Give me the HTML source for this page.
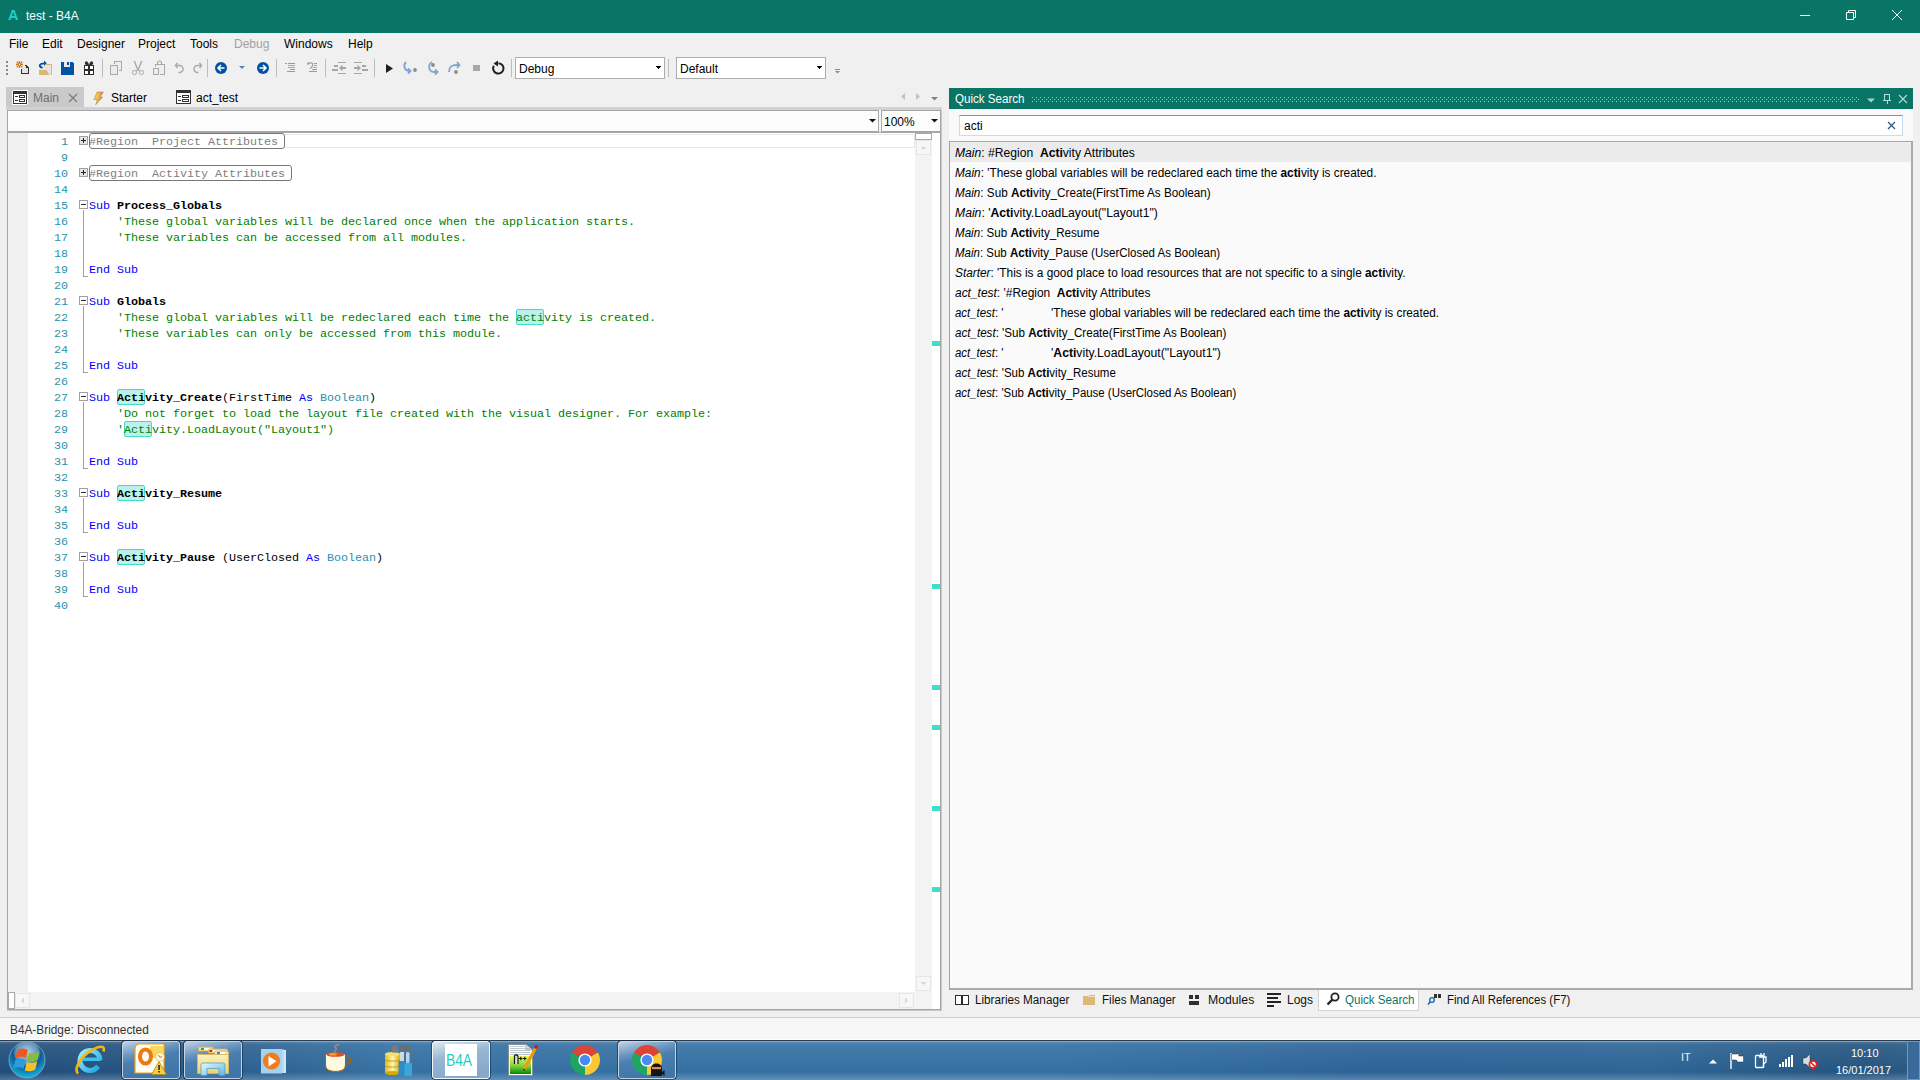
<!DOCTYPE html>
<html><head><meta charset="utf-8">
<style>
*{margin:0;padding:0;box-sizing:border-box}
html,body{width:1920px;height:1080px;overflow:hidden;background:#f0f0f0;font-family:"Liberation Sans",sans-serif;font-size:12px;color:#000}
div,span,svg{position:absolute}
span.i{position:static}
.t{white-space:pre;line-height:1}
.mono{font-family:"Liberation Mono",monospace;font-size:11.75px;letter-spacing:-0.05px;line-height:16px;white-space:pre}
.ln{left:8px;width:60px;text-align:right;color:#2b91af}
.cl{left:89px}
.kw{color:#0000ff;position:static}
.nm{font-weight:bold;position:static}
.cm{color:#008000;position:static}
.ty{color:#2b91af;position:static}
.rg{color:#808080;position:static}
.bk{color:#000;position:static}
.hl{height:16px;width:28px;background:#b9f2ec;border:1px solid #44d9c8;border-radius:2px}
.fb{width:9px;height:9px;border:1px solid #a0a0a0;background:#fff;left:79px}
.fv{left:83px;width:1px;background:#a0a0a0}
.fh{left:83px;height:1px;width:5px;background:#a0a0a0}
.mk{left:932px;width:8px;height:5px;background:#3ddfcb}
.qs{left:955px;font-size:12px;white-space:pre;line-height:20px;height:20px;transform-origin:0 0;padding-top:1px}
.qs i{font-style:italic}
.qs b{font-weight:bold}
.menu{top:38px;font-size:12px;white-space:pre}
.sep{width:1px;background:#c4c4c4}
</style></head><body>
<div style="left:0;top:0;width:1920px;height:33px;background:#087567"></div>
<div class="t" style="left:8px;top:8px;font-size:14.5px;font-weight:bold;color:#1fd0c6">A</div>
<div class="t" style="left:26px;top:10px;font-size:12px;color:#fff">test - B4A</div>
<div style="left:1800px;top:15px;width:10px;height:1px;background:#fff"></div>
<svg style="left:1845px;top:9px" width="12" height="12" viewBox="0 0 12 12"><path d="M1.5 3.5h7v7h-7z M3.5 3.5v-2h7v7h-2" fill="none" stroke="#fff" stroke-width="1"/></svg>
<svg style="left:1891px;top:9px" width="12" height="12" viewBox="0 0 12 12"><path d="M1 1L11 11M11 1L1 11" stroke="#fff" stroke-width="1"/></svg>
<!-- menu -->
<div class="menu t" style="left:9px">File</div>
<div class="menu t" style="left:42px">Edit</div>
<div class="menu t" style="left:77px">Designer</div>
<div class="menu t" style="left:138px">Project</div>
<div class="menu t" style="left:190px">Tools</div>
<div class="menu t" style="left:234px;color:#a2a2a2">Debug</div>
<div class="menu t" style="left:284px">Windows</div>
<div class="menu t" style="left:348px">Help</div>
<svg style="left:0;top:0" width="860" height="84" viewBox="0 0 860 84" shape-rendering="crispEdges">
<!-- grip -->
<g fill="#8a8a8a"><rect x="6" y="61" width="2" height="2"/><rect x="6" y="65" width="2" height="2"/><rect x="6" y="69" width="2" height="2"/><rect x="6" y="73" width="2" height="2"/></g>
<!-- new -->
<path d="M24.5 65.5h1.5l2.5 2.5v5.5h-7v-5" fill="#e3e3e3" stroke="#333" stroke-width="1.2"/>
<rect x="22" y="67" width="3" height="6" fill="#e3e3e3"/><path d="M26 65.5l2.5 2.5h-2.5z" fill="#333"/>
<g shape-rendering="auto"><path d="M16 64.5h7M19.5 61v7" stroke="#cc7a14" stroke-width="1.3"/>
<g fill="#cc7a14"><circle cx="17.4" cy="62.4" r="0.9"/><circle cx="21.6" cy="62.4" r="0.9"/><circle cx="17.4" cy="66.6" r="0.9"/><circle cx="21.6" cy="66.6" r="0.9"/><circle cx="19.5" cy="64.5" r="1.7"/></g>
<circle cx="19.5" cy="64.5" r="0.7" fill="#fff"/></g>
<!-- open -->
<rect x="39" y="65" width="12" height="10" fill="#e6e6e6"/>
<path d="M46 64.5h5.5v10.5" fill="none" stroke="#dcb478" stroke-width="1"/>
<path d="M39 70h7.5l3 5h-10.5z" fill="#ddb678" shape-rendering="auto"/>
<g shape-rendering="auto"><path d="M42.5 67.6c-3 0-3.6-2.6-1.6-3.6c1.4-0.7 3.2-0.6 4.6-0.6" fill="none" stroke="#0052a2" stroke-width="1.9"/><path d="M44 60.6l2.8 2.6-2.8 2.6z" fill="#0052a2"/></g>
<!-- save -->
<path d="M61 62h11l2 2v11h-13z" fill="#0052a4"/><rect x="64" y="62" width="6" height="5" fill="#e8e8e8"/><rect x="67" y="62" width="2" height="3" fill="#0052a4"/>
<!-- save all -->
<rect x="84" y="65" width="10" height="10" fill="#2d2d2d"/>
<g shape-rendering="auto" fill="#2d2d2d"><path d="M85 62.5c1-2 3-1.5 4 2.5h-2.5c-1 0-2-1-1.5-2.5z"/><path d="M93 62.5c-1-2-3-1.5-4 2.5h2.5c1 0 2-1 1.5-2.5z"/></g>
<g fill="#fff"><rect x="85" y="66" width="3" height="3"/><rect x="90" y="66" width="3" height="3"/><rect x="85" y="71" width="3" height="3"/><rect x="90" y="71" width="3" height="3"/></g>
<!-- seps -->
<g fill="#bdbdbd"><rect x="102" y="59" width="1" height="18"/><rect x="207" y="59" width="1" height="18"/><rect x="276" y="59" width="1" height="18"/><rect x="325" y="59" width="1" height="18"/><rect x="374" y="59" width="1" height="18"/><rect x="511" y="59" width="1" height="18"/><rect x="668" y="59" width="1" height="18"/></g>
<!-- copy -->
<g fill="#ebebeb" stroke="#a9a9a9" stroke-width="1"><path d="M114.5 64v-2.5h7v9h-2.5" fill="#eeeeee"/><rect x="110.5" y="65.5" width="7" height="9"/></g>
<!-- cut -->
<g fill="none" stroke="#a9a9a9" shape-rendering="auto"><path d="M134.3 61l3.7 9.3M141.7 61l-3.7 9.3" stroke-width="1.4"/><circle cx="134.5" cy="72.5" r="2.1" stroke-width="1"/><circle cx="141.5" cy="72.5" r="2.1" stroke-width="1"/><path d="M136 71l2-1 2 1" stroke-width="1"/></g>
<!-- paste -->
<g fill="none" stroke="#a9a9a9" stroke-width="1"><path d="M155.5 67v-2.5h9v10h-4.5" fill="#eeeeee"/><rect x="153.5" y="68.5" width="5" height="6" fill="#eeeeee"/></g>
<path d="M157.5 64.5v-1.5a2 2 0 0 1 4 0v1.5" fill="none" stroke="#a9a9a9" stroke-width="1.2" shape-rendering="auto"/>
<!-- undo redo -->
<g fill="none" stroke="#a9a9a9" stroke-width="1.5" shape-rendering="auto"><path d="M176 65.5h3.5a3.5 3.5 0 0 1 0 7h-1"/><path d="M177.5 63l-2 2.5 2 2.5"/><path d="M201 65.5h-3.5a3.5 3.5 0 0 0 0 7h1"/><path d="M199.5 63l2 2.5-2 2.5"/></g>
<!-- back fwd -->
<g shape-rendering="auto"><circle cx="221" cy="68" r="6" fill="#0051a2"/><path d="M224.5 68h-6M221 65l-3 3 3 3" fill="none" stroke="#fff" stroke-width="1.6"/>
<path d="M239 66h6l-3 3z" fill="#5a7ec2"/>
<circle cx="263" cy="68" r="6" fill="#0051a2"/><path d="M259.5 68h6M263 65l3 3-3 3" fill="none" stroke="#fff" stroke-width="1.6"/></g>
<!-- comment -->
<g fill="#9a9a9a"><rect x="285" y="63" width="2" height="1"/><rect x="288" y="63" width="7" height="1"/><rect x="290" y="69" width="5" height="1"/><rect x="287" y="71" width="8" height="1"/></g>
<g fill="#86bf86"><rect x="288" y="65" width="7" height="1"/><rect x="288" y="67" width="7" height="1"/></g>
<g fill="#9a9a9a"><rect x="314" y="63" width="3" height="1"/><rect x="312" y="69" width="5" height="1"/><rect x="309" y="71" width="8" height="1"/></g>
<g fill="#86bf86"><rect x="314" y="65" width="3" height="1"/><rect x="313" y="67" width="4" height="1"/></g>
<g shape-rendering="auto"><path d="M308.5 63.5c2-1.2 4.3-0.8 4.3 1.2c0 1.5-1.3 2.5-2.8 4" fill="none" stroke="#9a9a9a" stroke-width="1.1"/><path d="M307 62.5l3 0.6-2.2 2.4z" fill="#9a9a9a"/></g>
<!-- outdent indent -->
<g fill="#a6a6a6"><rect x="338" y="62" width="8" height="1"/><rect x="338" y="73" width="8" height="1"/><rect x="334" y="65" width="4" height="2"/><rect x="332" y="69" width="6" height="2"/><rect x="341" y="67" width="5" height="2"/>
<path d="M339 68l3.5-3.2v6.4z" shape-rendering="auto"/>
<rect x="354" y="62" width="8" height="1"/><rect x="354" y="73" width="8" height="1"/><rect x="362" y="65" width="4" height="2"/><rect x="362" y="69" width="6" height="2"/><rect x="354" y="67" width="4.5" height="2"/>
<path d="M361 68l-3.5-3.2v6.4z" shape-rendering="auto"/></g>
<!-- run -->
<path d="M386 64l7 4.5-7 4.5z" fill="#1e1e1e" shape-rendering="auto"/>
<!-- step -->
<g fill="none" stroke="#7ea8d2" stroke-width="1.9" shape-rendering="auto"><path d="M406 62c-3 3-2 9 4 9"/><path d="M408 68.5l2.5 2.5-2.5 2.5"/><path d="M432 62c-4 2-4 10 2 10h3"/><path d="M435 69.5l2.5 2.5-2.5 2.5"/><path d="M449 72c0-5 2-7 8-7h3"/><path d="M457 62l2.5 3-2.5 3"/></g>
<g fill="#8c8c8c" shape-rendering="auto"><circle cx="415" cy="70" r="1.9"/><circle cx="433" cy="65" r="1.9"/><circle cx="456" cy="72" r="1.9"/></g>
<rect x="473" y="65" width="7" height="6" fill="#a8a8a8"/>
<!-- restart -->
<g shape-rendering="auto"><path d="M498.5 63.2A5.2 5.2 0 1 1 493.8 65.8" fill="none" stroke="#1e1e1e" stroke-width="2"/><path d="M493.5 63.5l4.5-3v6z" fill="#1e1e1e"/></g>
<!-- combos -->
<rect x="515.5" y="57.5" width="149" height="21" fill="#fff" stroke="#adadad"/>
<path d="M655 66h6l-3 3z" fill="#000"/>
<rect x="676.5" y="57.5" width="149" height="21" fill="#fff" stroke="#adadad"/>
<path d="M816 66h6l-3 3z" fill="#000"/>
<g fill="#8a8a8a"><rect x="835" y="69" width="5" height="1"/><path d="M835 71h5l-2.5 2.5z" shape-rendering="auto"/></g>
</svg>
<div class="t" style="left:519px;top:63px;font-size:12px">Debug</div>
<div class="t" style="left:680px;top:63px;font-size:12px">Default</div>
<!-- doc tabs -->
<div style="left:6px;top:87px;width:78px;height:20px;background:#cacaca"></div>
<svg style="left:0;top:84px" width="260" height="24" viewBox="0 84 260 24" shape-rendering="crispEdges">
<rect x="12" y="90" width="16" height="15" rx="2" fill="#fff"/>
<rect x="13.5" y="91.5" width="13" height="12" fill="#fff" stroke="#333"/><rect x="13" y="91" width="14" height="3" fill="#333"/>
<rect x="15" y="96" width="3" height="1" fill="#333"/><rect x="15" y="100" width="3" height="1" fill="#333"/>
<rect x="19.5" y="95.5" width="5" height="2" fill="#fff" stroke="#333"/><rect x="19.5" y="99.5" width="5" height="2" fill="#fff" stroke="#333"/>
<path d="M69 94l8 8M77 94l-8 8" stroke="#787878" stroke-width="1.1" shape-rendering="auto"/>
<linearGradient id="bolt" x1="0" y1="0" x2="1" y2="0.3"><stop offset="0" stop-color="#d8e070"/><stop offset="0.45" stop-color="#ffc040"/><stop offset="1" stop-color="#f05870"/></linearGradient><path d="M97 92h6.3l-3.3 5h2.5l-6.8 7.8 1.8-5.3h-3.5z" fill="url(#bolt)" stroke="#8a8030" stroke-width="0.5" shape-rendering="auto"/>
<rect x="176" y="90" width="15" height="14" rx="1" fill="#fff"/>
<rect x="176.5" y="90.5" width="14" height="13" fill="#fff" stroke="#333"/><rect x="176" y="90" width="15" height="3" fill="#333"/>
<rect x="178" y="96" width="3" height="1" fill="#333"/><rect x="178" y="100" width="3" height="1" fill="#333"/>
<rect x="182.5" y="95.5" width="6" height="2" fill="#fff" stroke="#333"/><rect x="182.5" y="99.5" width="6" height="2" fill="#fff" stroke="#333"/>
</svg>
<div class="t" style="left:33px;top:92px;font-size:12px;color:#6e6e6e">Main</div>
<div class="t" style="left:111px;top:92px;font-size:12px">Starter</div>
<div class="t" style="left:196px;top:92px;font-size:12px">act_test</div>
<svg style="left:895px;top:88px" width="48" height="16" viewBox="895 88 48 16" shape-rendering="auto">
<path d="M905 93v7l-4-3.5z" fill="#c2c2c2"/><path d="M916 93v7l4-3.5z" fill="#c2c2c2"/><path d="M931 97h7l-3.5 3.5z" fill="#808080"/>
</svg>
<!-- editor frame -->
<div style="left:6px;top:107px;width:936px;height:3px;background:#d2d2d2"></div>
<div style="left:7px;top:110px;width:935px;height:901px;background:#c8c8c8"></div><div style="left:7px;top:110px;width:934px;height:900px;background:#a6a6a6"></div>
<div style="left:8px;top:111px;width:932px;height:20px;background:#fcfcfc"></div>
<div style="left:879px;top:110px;width:2px;height:22px;background:#f6f6f6"></div><div style="left:878px;top:111px;width:1px;height:20px;background:#a8a8a8"></div><div style="left:881px;top:111px;width:1px;height:20px;background:#a8a8a8"></div>
<svg style="left:860px;top:111px" width="82" height="20" viewBox="860 111 82 20"><path d="M869 119h7l-3.5 3.5z" fill="#111"/><path d="M931 119h7l-3.5 3.5z" fill="#111"/></svg>
<div class="t" style="left:884px;top:116px;font-size:12px">100%</div>
<div style="left:8px;top:133px;width:932px;height:876px;background:#fff"></div>
<div style="left:8px;top:133px;width:20px;height:859px;background:#f0f0f0"></div>
<!-- current line -->
<div style="left:285px;top:134px;width:630px;height:14px;border:1px solid #e8e8e8;border-left:none"></div>
<!-- vscroll -->
<div style="left:915px;top:133px;width:17px;height:859px;background:#f3f3f3"></div>
<div style="left:915px;top:133px;width:17px;height:7px;background:#fff;border:1px solid #a9a9a9"></div>
<div style="left:916px;top:140px;width:15px;height:15px;background:#f7f7f7;border:1px solid #e6e6e6"></div>
<svg style="left:916px;top:140px" width="15" height="15" viewBox="0 0 15 15"><path d="M4.5 9h6l-3-3z" fill="#d8d8d8"/></svg>
<div style="left:916px;top:976px;width:15px;height:15px;background:#f7f7f7;border:1px solid #e6e6e6"></div>
<svg style="left:916px;top:976px" width="15" height="15" viewBox="0 0 15 15"><path d="M4.5 6h6l-3 3z" fill="#d8d8d8"/></svg>
<!-- hscroll -->
<div style="left:8px;top:992px;width:924px;height:17px;background:#f3f3f3"></div>
<div style="left:8px;top:992px;width:7px;height:17px;background:#fff;border:1px solid #a9a9a9"></div>
<div style="left:15px;top:993px;width:15px;height:15px;background:#f7f7f7;border:1px solid #e6e6e6"></div>
<svg style="left:15px;top:993px" width="15" height="15" viewBox="0 0 15 15"><path d="M9 4.5v6l-3-3z" fill="#d8d8d8"/></svg>
<div style="left:899px;top:993px;width:15px;height:15px;background:#f7f7f7;border:1px solid #e6e6e6"></div>
<svg style="left:899px;top:993px" width="15" height="15" viewBox="0 0 15 15"><path d="M6 4.5v6l3-3z" fill="#d8d8d8"/></svg>
<!-- markers -->
<div class="mk" style="top:341px"></div><div class="mk" style="top:584px"></div><div class="mk" style="top:685px"></div><div class="mk" style="top:725px"></div><div class="mk" style="top:806px"></div><div class="mk" style="top:887px"></div>
<div style="left:89px;top:133px;width:196px;height:16px;border:1.5px solid #777;border-radius:3px"></div>
<div class="fb" style="top:136px;background:#e4e4e4"></div><div style="left:81px;top:140px;width:5px;height:1px;background:#222"></div><div style="left:83px;top:138px;width:1px;height:5px;background:#222"></div>
<div style="left:89px;top:165px;width:203px;height:16px;border:1.5px solid #777;border-radius:3px"></div>
<div class="fb" style="top:168px;background:#e4e4e4"></div><div style="left:81px;top:172px;width:5px;height:1px;background:#222"></div><div style="left:83px;top:170px;width:1px;height:5px;background:#222"></div>
<div class="hl" style="left:516px;top:309px"></div>
<div class="hl" style="left:117px;top:389px"></div>
<div class="hl" style="left:124px;top:421px"></div>
<div class="hl" style="left:117px;top:485px"></div>
<div class="hl" style="left:117px;top:549px"></div>
<div class="mono ln" style="top:134px">1</div>
<div class="mono cl rg" style="top:134px;position:absolute">#Region  Project Attributes</div>
<div class="mono ln" style="top:150px">9</div>
<div class="mono ln" style="top:166px">10</div>
<div class="mono cl rg" style="top:166px;position:absolute">#Region  Activity Attributes</div>
<div class="mono ln" style="top:182px">14</div>
<div class="mono ln" style="top:198px">15</div>
<div class="mono cl" style="top:198px"><span class="kw">Sub </span><span class="nm">Process_Globals</span></div>
<div class="mono ln" style="top:214px">16</div>
<div class="mono cl" style="top:214px"><span class="cm">    &#x27;These global variables will be declared once when the application starts.</span></div>
<div class="mono ln" style="top:230px">17</div>
<div class="mono cl" style="top:230px"><span class="cm">    &#x27;These variables can be accessed from all modules.</span></div>
<div class="mono ln" style="top:246px">18</div>
<div class="mono ln" style="top:262px">19</div>
<div class="mono cl" style="top:262px"><span class="kw">End Sub</span></div>
<div class="mono ln" style="top:278px">20</div>
<div class="mono ln" style="top:294px">21</div>
<div class="mono cl" style="top:294px"><span class="kw">Sub </span><span class="nm">Globals</span></div>
<div class="mono ln" style="top:310px">22</div>
<div class="mono cl" style="top:310px"><span class="cm">    &#x27;These global variables will be redeclared each time the activity is created.</span></div>
<div class="mono ln" style="top:326px">23</div>
<div class="mono cl" style="top:326px"><span class="cm">    &#x27;These variables can only be accessed from this module.</span></div>
<div class="mono ln" style="top:342px">24</div>
<div class="mono ln" style="top:358px">25</div>
<div class="mono cl" style="top:358px"><span class="kw">End Sub</span></div>
<div class="mono ln" style="top:374px">26</div>
<div class="mono ln" style="top:390px">27</div>
<div class="mono cl" style="top:390px"><span class="kw">Sub </span><span class="nm">Activity_Create</span><span class="bk">(FirstTime </span><span class="kw">As </span><span class="ty">Boolean</span><span class="bk">)</span></div>
<div class="mono ln" style="top:406px">28</div>
<div class="mono cl" style="top:406px"><span class="cm">    &#x27;Do not forget to load the layout file created with the visual designer. For example:</span></div>
<div class="mono ln" style="top:422px">29</div>
<div class="mono cl" style="top:422px"><span class="cm">    &#x27;Activity.LoadLayout(&quot;Layout1&quot;)</span></div>
<div class="mono ln" style="top:438px">30</div>
<div class="mono ln" style="top:454px">31</div>
<div class="mono cl" style="top:454px"><span class="kw">End Sub</span></div>
<div class="mono ln" style="top:470px">32</div>
<div class="mono ln" style="top:486px">33</div>
<div class="mono cl" style="top:486px"><span class="kw">Sub </span><span class="nm">Activity_Resume</span></div>
<div class="mono ln" style="top:502px">34</div>
<div class="mono ln" style="top:518px">35</div>
<div class="mono cl" style="top:518px"><span class="kw">End Sub</span></div>
<div class="mono ln" style="top:534px">36</div>
<div class="mono ln" style="top:550px">37</div>
<div class="mono cl" style="top:550px"><span class="kw">Sub </span><span class="nm">Activity_Pause</span><span class="bk"> (UserClosed </span><span class="kw">As </span><span class="ty">Boolean</span><span class="bk">)</span></div>
<div class="mono ln" style="top:566px">38</div>
<div class="mono ln" style="top:582px">39</div>
<div class="mono cl" style="top:582px"><span class="kw">End Sub</span></div>
<div class="mono ln" style="top:598px">40</div>
<div class="fb" style="top:200px"></div><div style="left:81px;top:204px;width:5px;height:1px;background:#333"></div>
<div class="fv" style="top:210px;height:66px"></div><div class="fh" style="top:276px"></div>
<div class="fb" style="top:296px"></div><div style="left:81px;top:300px;width:5px;height:1px;background:#333"></div>
<div class="fv" style="top:306px;height:66px"></div><div class="fh" style="top:372px"></div>
<div class="fb" style="top:392px"></div><div style="left:81px;top:396px;width:5px;height:1px;background:#333"></div>
<div class="fv" style="top:402px;height:66px"></div><div class="fh" style="top:468px"></div>
<div class="fb" style="top:488px"></div><div style="left:81px;top:492px;width:5px;height:1px;background:#333"></div>
<div class="fv" style="top:498px;height:34px"></div><div class="fh" style="top:532px"></div>
<div class="fb" style="top:552px"></div><div style="left:81px;top:556px;width:5px;height:1px;background:#333"></div>
<div class="fv" style="top:562px;height:34px"></div><div class="fh" style="top:596px"></div>
<div style="left:942px;top:88px;width:978px;height:902px;background:#f0f0f0"></div>
<div style="left:949px;top:88px;width:964px;height:21px;background:#087567"></div>
<div class="t" style="left:955px;top:93px;font-size:12px;color:#fff;transform:scaleX(0.965);transform-origin:0 0">Quick Search</div>
<svg style="left:0;top:0" width="1920" height="110" viewBox="0 0 1920 110" shape-rendering="crispEdges"><path d="M1032 97h1v1h-1zM1036 97h1v1h-1zM1040 97h1v1h-1zM1044 97h1v1h-1zM1048 97h1v1h-1zM1052 97h1v1h-1zM1056 97h1v1h-1zM1060 97h1v1h-1zM1064 97h1v1h-1zM1068 97h1v1h-1zM1072 97h1v1h-1zM1076 97h1v1h-1zM1080 97h1v1h-1zM1084 97h1v1h-1zM1088 97h1v1h-1zM1092 97h1v1h-1zM1096 97h1v1h-1zM1100 97h1v1h-1zM1104 97h1v1h-1zM1108 97h1v1h-1zM1112 97h1v1h-1zM1116 97h1v1h-1zM1120 97h1v1h-1zM1124 97h1v1h-1zM1128 97h1v1h-1zM1132 97h1v1h-1zM1136 97h1v1h-1zM1140 97h1v1h-1zM1144 97h1v1h-1zM1148 97h1v1h-1zM1152 97h1v1h-1zM1156 97h1v1h-1zM1160 97h1v1h-1zM1164 97h1v1h-1zM1168 97h1v1h-1zM1172 97h1v1h-1zM1176 97h1v1h-1zM1180 97h1v1h-1zM1184 97h1v1h-1zM1188 97h1v1h-1zM1192 97h1v1h-1zM1196 97h1v1h-1zM1200 97h1v1h-1zM1204 97h1v1h-1zM1208 97h1v1h-1zM1212 97h1v1h-1zM1216 97h1v1h-1zM1220 97h1v1h-1zM1224 97h1v1h-1zM1228 97h1v1h-1zM1232 97h1v1h-1zM1236 97h1v1h-1zM1240 97h1v1h-1zM1244 97h1v1h-1zM1248 97h1v1h-1zM1252 97h1v1h-1zM1256 97h1v1h-1zM1260 97h1v1h-1zM1264 97h1v1h-1zM1268 97h1v1h-1zM1272 97h1v1h-1zM1276 97h1v1h-1zM1280 97h1v1h-1zM1284 97h1v1h-1zM1288 97h1v1h-1zM1292 97h1v1h-1zM1296 97h1v1h-1zM1300 97h1v1h-1zM1304 97h1v1h-1zM1308 97h1v1h-1zM1312 97h1v1h-1zM1316 97h1v1h-1zM1320 97h1v1h-1zM1324 97h1v1h-1zM1328 97h1v1h-1zM1332 97h1v1h-1zM1336 97h1v1h-1zM1340 97h1v1h-1zM1344 97h1v1h-1zM1348 97h1v1h-1zM1352 97h1v1h-1zM1356 97h1v1h-1zM1360 97h1v1h-1zM1364 97h1v1h-1zM1368 97h1v1h-1zM1372 97h1v1h-1zM1376 97h1v1h-1zM1380 97h1v1h-1zM1384 97h1v1h-1zM1388 97h1v1h-1zM1392 97h1v1h-1zM1396 97h1v1h-1zM1400 97h1v1h-1zM1404 97h1v1h-1zM1408 97h1v1h-1zM1412 97h1v1h-1zM1416 97h1v1h-1zM1420 97h1v1h-1zM1424 97h1v1h-1zM1428 97h1v1h-1zM1432 97h1v1h-1zM1436 97h1v1h-1zM1440 97h1v1h-1zM1444 97h1v1h-1zM1448 97h1v1h-1zM1452 97h1v1h-1zM1456 97h1v1h-1zM1460 97h1v1h-1zM1464 97h1v1h-1zM1468 97h1v1h-1zM1472 97h1v1h-1zM1476 97h1v1h-1zM1480 97h1v1h-1zM1484 97h1v1h-1zM1488 97h1v1h-1zM1492 97h1v1h-1zM1496 97h1v1h-1zM1500 97h1v1h-1zM1504 97h1v1h-1zM1508 97h1v1h-1zM1512 97h1v1h-1zM1516 97h1v1h-1zM1520 97h1v1h-1zM1524 97h1v1h-1zM1528 97h1v1h-1zM1532 97h1v1h-1zM1536 97h1v1h-1zM1540 97h1v1h-1zM1544 97h1v1h-1zM1548 97h1v1h-1zM1552 97h1v1h-1zM1556 97h1v1h-1zM1560 97h1v1h-1zM1564 97h1v1h-1zM1568 97h1v1h-1zM1572 97h1v1h-1zM1576 97h1v1h-1zM1580 97h1v1h-1zM1584 97h1v1h-1zM1588 97h1v1h-1zM1592 97h1v1h-1zM1596 97h1v1h-1zM1600 97h1v1h-1zM1604 97h1v1h-1zM1608 97h1v1h-1zM1612 97h1v1h-1zM1616 97h1v1h-1zM1620 97h1v1h-1zM1624 97h1v1h-1zM1628 97h1v1h-1zM1632 97h1v1h-1zM1636 97h1v1h-1zM1640 97h1v1h-1zM1644 97h1v1h-1zM1648 97h1v1h-1zM1652 97h1v1h-1zM1656 97h1v1h-1zM1660 97h1v1h-1zM1664 97h1v1h-1zM1668 97h1v1h-1zM1672 97h1v1h-1zM1676 97h1v1h-1zM1680 97h1v1h-1zM1684 97h1v1h-1zM1688 97h1v1h-1zM1692 97h1v1h-1zM1696 97h1v1h-1zM1700 97h1v1h-1zM1704 97h1v1h-1zM1708 97h1v1h-1zM1712 97h1v1h-1zM1716 97h1v1h-1zM1720 97h1v1h-1zM1724 97h1v1h-1zM1728 97h1v1h-1zM1732 97h1v1h-1zM1736 97h1v1h-1zM1740 97h1v1h-1zM1744 97h1v1h-1zM1748 97h1v1h-1zM1752 97h1v1h-1zM1756 97h1v1h-1zM1760 97h1v1h-1zM1764 97h1v1h-1zM1768 97h1v1h-1zM1772 97h1v1h-1zM1776 97h1v1h-1zM1780 97h1v1h-1zM1784 97h1v1h-1zM1788 97h1v1h-1zM1792 97h1v1h-1zM1796 97h1v1h-1zM1800 97h1v1h-1zM1804 97h1v1h-1zM1808 97h1v1h-1zM1812 97h1v1h-1zM1816 97h1v1h-1zM1820 97h1v1h-1zM1824 97h1v1h-1zM1828 97h1v1h-1zM1832 97h1v1h-1zM1836 97h1v1h-1zM1840 97h1v1h-1zM1844 97h1v1h-1zM1848 97h1v1h-1zM1852 97h1v1h-1zM1856 97h1v1h-1zM1034 99h1v1h-1zM1038 99h1v1h-1zM1042 99h1v1h-1zM1046 99h1v1h-1zM1050 99h1v1h-1zM1054 99h1v1h-1zM1058 99h1v1h-1zM1062 99h1v1h-1zM1066 99h1v1h-1zM1070 99h1v1h-1zM1074 99h1v1h-1zM1078 99h1v1h-1zM1082 99h1v1h-1zM1086 99h1v1h-1zM1090 99h1v1h-1zM1094 99h1v1h-1zM1098 99h1v1h-1zM1102 99h1v1h-1zM1106 99h1v1h-1zM1110 99h1v1h-1zM1114 99h1v1h-1zM1118 99h1v1h-1zM1122 99h1v1h-1zM1126 99h1v1h-1zM1130 99h1v1h-1zM1134 99h1v1h-1zM1138 99h1v1h-1zM1142 99h1v1h-1zM1146 99h1v1h-1zM1150 99h1v1h-1zM1154 99h1v1h-1zM1158 99h1v1h-1zM1162 99h1v1h-1zM1166 99h1v1h-1zM1170 99h1v1h-1zM1174 99h1v1h-1zM1178 99h1v1h-1zM1182 99h1v1h-1zM1186 99h1v1h-1zM1190 99h1v1h-1zM1194 99h1v1h-1zM1198 99h1v1h-1zM1202 99h1v1h-1zM1206 99h1v1h-1zM1210 99h1v1h-1zM1214 99h1v1h-1zM1218 99h1v1h-1zM1222 99h1v1h-1zM1226 99h1v1h-1zM1230 99h1v1h-1zM1234 99h1v1h-1zM1238 99h1v1h-1zM1242 99h1v1h-1zM1246 99h1v1h-1zM1250 99h1v1h-1zM1254 99h1v1h-1zM1258 99h1v1h-1zM1262 99h1v1h-1zM1266 99h1v1h-1zM1270 99h1v1h-1zM1274 99h1v1h-1zM1278 99h1v1h-1zM1282 99h1v1h-1zM1286 99h1v1h-1zM1290 99h1v1h-1zM1294 99h1v1h-1zM1298 99h1v1h-1zM1302 99h1v1h-1zM1306 99h1v1h-1zM1310 99h1v1h-1zM1314 99h1v1h-1zM1318 99h1v1h-1zM1322 99h1v1h-1zM1326 99h1v1h-1zM1330 99h1v1h-1zM1334 99h1v1h-1zM1338 99h1v1h-1zM1342 99h1v1h-1zM1346 99h1v1h-1zM1350 99h1v1h-1zM1354 99h1v1h-1zM1358 99h1v1h-1zM1362 99h1v1h-1zM1366 99h1v1h-1zM1370 99h1v1h-1zM1374 99h1v1h-1zM1378 99h1v1h-1zM1382 99h1v1h-1zM1386 99h1v1h-1zM1390 99h1v1h-1zM1394 99h1v1h-1zM1398 99h1v1h-1zM1402 99h1v1h-1zM1406 99h1v1h-1zM1410 99h1v1h-1zM1414 99h1v1h-1zM1418 99h1v1h-1zM1422 99h1v1h-1zM1426 99h1v1h-1zM1430 99h1v1h-1zM1434 99h1v1h-1zM1438 99h1v1h-1zM1442 99h1v1h-1zM1446 99h1v1h-1zM1450 99h1v1h-1zM1454 99h1v1h-1zM1458 99h1v1h-1zM1462 99h1v1h-1zM1466 99h1v1h-1zM1470 99h1v1h-1zM1474 99h1v1h-1zM1478 99h1v1h-1zM1482 99h1v1h-1zM1486 99h1v1h-1zM1490 99h1v1h-1zM1494 99h1v1h-1zM1498 99h1v1h-1zM1502 99h1v1h-1zM1506 99h1v1h-1zM1510 99h1v1h-1zM1514 99h1v1h-1zM1518 99h1v1h-1zM1522 99h1v1h-1zM1526 99h1v1h-1zM1530 99h1v1h-1zM1534 99h1v1h-1zM1538 99h1v1h-1zM1542 99h1v1h-1zM1546 99h1v1h-1zM1550 99h1v1h-1zM1554 99h1v1h-1zM1558 99h1v1h-1zM1562 99h1v1h-1zM1566 99h1v1h-1zM1570 99h1v1h-1zM1574 99h1v1h-1zM1578 99h1v1h-1zM1582 99h1v1h-1zM1586 99h1v1h-1zM1590 99h1v1h-1zM1594 99h1v1h-1zM1598 99h1v1h-1zM1602 99h1v1h-1zM1606 99h1v1h-1zM1610 99h1v1h-1zM1614 99h1v1h-1zM1618 99h1v1h-1zM1622 99h1v1h-1zM1626 99h1v1h-1zM1630 99h1v1h-1zM1634 99h1v1h-1zM1638 99h1v1h-1zM1642 99h1v1h-1zM1646 99h1v1h-1zM1650 99h1v1h-1zM1654 99h1v1h-1zM1658 99h1v1h-1zM1662 99h1v1h-1zM1666 99h1v1h-1zM1670 99h1v1h-1zM1674 99h1v1h-1zM1678 99h1v1h-1zM1682 99h1v1h-1zM1686 99h1v1h-1zM1690 99h1v1h-1zM1694 99h1v1h-1zM1698 99h1v1h-1zM1702 99h1v1h-1zM1706 99h1v1h-1zM1710 99h1v1h-1zM1714 99h1v1h-1zM1718 99h1v1h-1zM1722 99h1v1h-1zM1726 99h1v1h-1zM1730 99h1v1h-1zM1734 99h1v1h-1zM1738 99h1v1h-1zM1742 99h1v1h-1zM1746 99h1v1h-1zM1750 99h1v1h-1zM1754 99h1v1h-1zM1758 99h1v1h-1zM1762 99h1v1h-1zM1766 99h1v1h-1zM1770 99h1v1h-1zM1774 99h1v1h-1zM1778 99h1v1h-1zM1782 99h1v1h-1zM1786 99h1v1h-1zM1790 99h1v1h-1zM1794 99h1v1h-1zM1798 99h1v1h-1zM1802 99h1v1h-1zM1806 99h1v1h-1zM1810 99h1v1h-1zM1814 99h1v1h-1zM1818 99h1v1h-1zM1822 99h1v1h-1zM1826 99h1v1h-1zM1830 99h1v1h-1zM1834 99h1v1h-1zM1838 99h1v1h-1zM1842 99h1v1h-1zM1846 99h1v1h-1zM1850 99h1v1h-1zM1854 99h1v1h-1zM1858 99h1v1h-1zM1032 101h1v1h-1zM1036 101h1v1h-1zM1040 101h1v1h-1zM1044 101h1v1h-1zM1048 101h1v1h-1zM1052 101h1v1h-1zM1056 101h1v1h-1zM1060 101h1v1h-1zM1064 101h1v1h-1zM1068 101h1v1h-1zM1072 101h1v1h-1zM1076 101h1v1h-1zM1080 101h1v1h-1zM1084 101h1v1h-1zM1088 101h1v1h-1zM1092 101h1v1h-1zM1096 101h1v1h-1zM1100 101h1v1h-1zM1104 101h1v1h-1zM1108 101h1v1h-1zM1112 101h1v1h-1zM1116 101h1v1h-1zM1120 101h1v1h-1zM1124 101h1v1h-1zM1128 101h1v1h-1zM1132 101h1v1h-1zM1136 101h1v1h-1zM1140 101h1v1h-1zM1144 101h1v1h-1zM1148 101h1v1h-1zM1152 101h1v1h-1zM1156 101h1v1h-1zM1160 101h1v1h-1zM1164 101h1v1h-1zM1168 101h1v1h-1zM1172 101h1v1h-1zM1176 101h1v1h-1zM1180 101h1v1h-1zM1184 101h1v1h-1zM1188 101h1v1h-1zM1192 101h1v1h-1zM1196 101h1v1h-1zM1200 101h1v1h-1zM1204 101h1v1h-1zM1208 101h1v1h-1zM1212 101h1v1h-1zM1216 101h1v1h-1zM1220 101h1v1h-1zM1224 101h1v1h-1zM1228 101h1v1h-1zM1232 101h1v1h-1zM1236 101h1v1h-1zM1240 101h1v1h-1zM1244 101h1v1h-1zM1248 101h1v1h-1zM1252 101h1v1h-1zM1256 101h1v1h-1zM1260 101h1v1h-1zM1264 101h1v1h-1zM1268 101h1v1h-1zM1272 101h1v1h-1zM1276 101h1v1h-1zM1280 101h1v1h-1zM1284 101h1v1h-1zM1288 101h1v1h-1zM1292 101h1v1h-1zM1296 101h1v1h-1zM1300 101h1v1h-1zM1304 101h1v1h-1zM1308 101h1v1h-1zM1312 101h1v1h-1zM1316 101h1v1h-1zM1320 101h1v1h-1zM1324 101h1v1h-1zM1328 101h1v1h-1zM1332 101h1v1h-1zM1336 101h1v1h-1zM1340 101h1v1h-1zM1344 101h1v1h-1zM1348 101h1v1h-1zM1352 101h1v1h-1zM1356 101h1v1h-1zM1360 101h1v1h-1zM1364 101h1v1h-1zM1368 101h1v1h-1zM1372 101h1v1h-1zM1376 101h1v1h-1zM1380 101h1v1h-1zM1384 101h1v1h-1zM1388 101h1v1h-1zM1392 101h1v1h-1zM1396 101h1v1h-1zM1400 101h1v1h-1zM1404 101h1v1h-1zM1408 101h1v1h-1zM1412 101h1v1h-1zM1416 101h1v1h-1zM1420 101h1v1h-1zM1424 101h1v1h-1zM1428 101h1v1h-1zM1432 101h1v1h-1zM1436 101h1v1h-1zM1440 101h1v1h-1zM1444 101h1v1h-1zM1448 101h1v1h-1zM1452 101h1v1h-1zM1456 101h1v1h-1zM1460 101h1v1h-1zM1464 101h1v1h-1zM1468 101h1v1h-1zM1472 101h1v1h-1zM1476 101h1v1h-1zM1480 101h1v1h-1zM1484 101h1v1h-1zM1488 101h1v1h-1zM1492 101h1v1h-1zM1496 101h1v1h-1zM1500 101h1v1h-1zM1504 101h1v1h-1zM1508 101h1v1h-1zM1512 101h1v1h-1zM1516 101h1v1h-1zM1520 101h1v1h-1zM1524 101h1v1h-1zM1528 101h1v1h-1zM1532 101h1v1h-1zM1536 101h1v1h-1zM1540 101h1v1h-1zM1544 101h1v1h-1zM1548 101h1v1h-1zM1552 101h1v1h-1zM1556 101h1v1h-1zM1560 101h1v1h-1zM1564 101h1v1h-1zM1568 101h1v1h-1zM1572 101h1v1h-1zM1576 101h1v1h-1zM1580 101h1v1h-1zM1584 101h1v1h-1zM1588 101h1v1h-1zM1592 101h1v1h-1zM1596 101h1v1h-1zM1600 101h1v1h-1zM1604 101h1v1h-1zM1608 101h1v1h-1zM1612 101h1v1h-1zM1616 101h1v1h-1zM1620 101h1v1h-1zM1624 101h1v1h-1zM1628 101h1v1h-1zM1632 101h1v1h-1zM1636 101h1v1h-1zM1640 101h1v1h-1zM1644 101h1v1h-1zM1648 101h1v1h-1zM1652 101h1v1h-1zM1656 101h1v1h-1zM1660 101h1v1h-1zM1664 101h1v1h-1zM1668 101h1v1h-1zM1672 101h1v1h-1zM1676 101h1v1h-1zM1680 101h1v1h-1zM1684 101h1v1h-1zM1688 101h1v1h-1zM1692 101h1v1h-1zM1696 101h1v1h-1zM1700 101h1v1h-1zM1704 101h1v1h-1zM1708 101h1v1h-1zM1712 101h1v1h-1zM1716 101h1v1h-1zM1720 101h1v1h-1zM1724 101h1v1h-1zM1728 101h1v1h-1zM1732 101h1v1h-1zM1736 101h1v1h-1zM1740 101h1v1h-1zM1744 101h1v1h-1zM1748 101h1v1h-1zM1752 101h1v1h-1zM1756 101h1v1h-1zM1760 101h1v1h-1zM1764 101h1v1h-1zM1768 101h1v1h-1zM1772 101h1v1h-1zM1776 101h1v1h-1zM1780 101h1v1h-1zM1784 101h1v1h-1zM1788 101h1v1h-1zM1792 101h1v1h-1zM1796 101h1v1h-1zM1800 101h1v1h-1zM1804 101h1v1h-1zM1808 101h1v1h-1zM1812 101h1v1h-1zM1816 101h1v1h-1zM1820 101h1v1h-1zM1824 101h1v1h-1zM1828 101h1v1h-1zM1832 101h1v1h-1zM1836 101h1v1h-1zM1840 101h1v1h-1zM1844 101h1v1h-1zM1848 101h1v1h-1zM1852 101h1v1h-1zM1856 101h1v1h-1z" fill="#9fcdc5"/><path d="M1867 98.5h8l-4 4z" fill="#a3d2ca" shape-rendering="auto"/><path d="M1884.5 94.5h5v6h-5z" fill="none" stroke="#b5dcd5"/><rect x="1883" y="100" width="8" height="1" fill="#b5dcd5"/><rect x="1887" y="101" width="1" height="3" fill="#b5dcd5"/><path d="M1899 95l8 8M1907 95l-8 8" stroke="#b5dcd5" stroke-width="1.1" shape-rendering="auto"/></svg>
<div style="left:949px;top:109px;width:964px;height:32px;background:#f9f9f9"></div>
<div style="left:959px;top:115px;width:944px;height:21px;background:#fff;border:1px solid #c5dcf1;border-top-color:#5b9bd5"></div>
<div class="t" style="left:964px;top:120px;font-size:12px">acti</div>
<svg style="left:1886px;top:120px" width="12" height="12" viewBox="0 0 12 12"><path d="M2 2l7 7M9 2l-7 7" stroke="#2c4d7e" stroke-width="1.1"/></svg>
<div style="left:949px;top:141px;width:964px;height:849px;background:#fafafa;border:1px solid #a3a3a3;border-right:2px solid #ababab;border-bottom:2px solid #ababab"></div>
<div style="left:950px;top:142px;width:961px;height:20px;background:#ebebeb;border-top:1px solid #f2f2f2"></div>
<div class="qs" style="top:142px;transform:scaleX(1.01)"><i>Main</i>: #Region  <b>Acti</b>vity Attributes</div>
<div class="qs" style="top:162px;transform:scaleX(0.985)"><i>Main</i>: &#x27;These global variables will be redeclared each time the <b>acti</b>vity is created.</div>
<div class="qs" style="top:182px;transform:scaleX(0.975)"><i>Main</i>: Sub <b>Acti</b>vity_Create(FirstTime As Boolean)</div>
<div class="qs" style="top:202px;transform:scaleX(1.014)"><i>Main</i>: &#x27;<b>Acti</b>vity.LoadLayout(&quot;Layout1&quot;)</div>
<div class="qs" style="top:222px;transform:scaleX(0.966)"><i>Main</i>: Sub <b>Acti</b>vity_Resume</div>
<div class="qs" style="top:242px;transform:scaleX(0.958)"><i>Main</i>: Sub <b>Acti</b>vity_Pause (UserClosed As Boolean)</div>
<div class="qs" style="top:262px;transform:scaleX(0.986)"><i>Starter</i>: &#x27;This is a good place to load resources that are not specific to a single <b>acti</b>vity.</div>
<div class="qs" style="top:282px;transform:scaleX(0.995)"><i>act_test</i>: &#x27;#Region  <b>Acti</b>vity Attributes</div>
<div class="qs" style="top:302px;transform:scaleX(0.95)"><i>act_test</i>: &#x27;</div>
<div class="qs" style="left:1051px;top:302px;transform:scaleX(0.982)">&#x27;These global variables will be redeclared each time the <b>acti</b>vity is created.</div>
<div class="qs" style="top:322px;transform:scaleX(0.967)"><i>act_test</i>: &#x27;Sub <b>Acti</b>vity_Create(FirstTime As Boolean)</div>
<div class="qs" style="top:342px;transform:scaleX(0.95)"><i>act_test</i>: &#x27;</div>
<div class="qs" style="left:1051px;top:342px;transform:scaleX(1.015)">&#x27;<b>Acti</b>vity.LoadLayout(&quot;Layout1&quot;)</div>
<div class="qs" style="top:362px;transform:scaleX(0.959)"><i>act_test</i>: &#x27;Sub <b>Acti</b>vity_Resume</div>
<div class="qs" style="top:382px;transform:scaleX(0.953)"><i>act_test</i>: &#x27;Sub <b>Acti</b>vity_Pause (UserClosed As Boolean)</div>
<!-- bottom tabs -->
<div style="left:1318px;top:990px;width:101px;height:21px;background:#fff;border:1px solid #d2d2d2;border-top:none"></div>
<svg style="left:940px;top:988px" width="520" height="24" viewBox="940 988 520 24" shape-rendering="crispEdges">
<path d="M955.5 995.5h6v9h-6zM962.5 995.5h6v9h-6z" fill="#fff" stroke="#2b2b2b"/>
<path d="M1083 996h5l1-1h6v10h-12z" fill="#dcb775"/><rect x="1088" y="996" width="7" height="1" fill="#f3e3c0"/>
<g fill="#2f2f2f"><rect x="1189" y="995" width="4" height="4"/><rect x="1195" y="995" width="4" height="4"/><rect x="1189" y="1001" width="10" height="4"/></g>
<g fill="#222"><rect x="1267" y="993" width="14" height="2"/><rect x="1267" y="997" width="11" height="2"/><rect x="1267" y="1001" width="14" height="2"/><rect x="1267" y="1005" width="7" height="2"/></g>
<g shape-rendering="auto"><circle cx="1335" cy="997" r="3.6" fill="none" stroke="#222" stroke-width="1.8"/><path d="M1332.5 999.5l-5 5" stroke="#222" stroke-width="2.4"/></g>
<g fill="#333"><rect x="1434" y="994" width="3" height="4"/><rect x="1438" y="994" width="3" height="4"/></g>
<g shape-rendering="auto"><circle cx="1432" cy="1000" r="2.3" fill="none" stroke="#1c5fb3" stroke-width="1.3"/><path d="M1430.3 1001.8l-2.3 2.6" stroke="#1c5fb3" stroke-width="1.5"/></g>
</svg>
<div class="t" style="left:975px;top:994px;font-size:12px;color:#111;transform:scaleX(0.975);transform-origin:0 0">Libraries Manager</div>
<div class="t" style="left:1102px;top:994px;font-size:12px;color:#111;transform:scaleX(0.97);transform-origin:0 0">Files Manager</div>
<div class="t" style="left:1208px;top:994px;font-size:12px;color:#111;transform:scaleX(1.02);transform-origin:0 0">Modules</div>
<div class="t" style="left:1287px;top:994px;font-size:12px;color:#111">Logs</div>
<div class="t" style="left:1345px;top:994px;font-size:12px;color:#0a7568;transform:scaleX(0.965);transform-origin:0 0">Quick Search</div>
<div class="t" style="left:1447px;top:994px;font-size:12px;color:#111;transform:scaleX(0.953);transform-origin:0 0">Find All References (F7)</div>
<!-- status bar -->
<div style="left:0;top:1017px;width:1920px;height:1px;background:#cfcfcf"></div>
<div style="left:0;top:1018px;width:1920px;height:22px;background:#f7f7f7"></div>
<div class="t" style="left:10px;top:1024px;font-size:12px;color:#333;transform:scaleX(0.986);transform-origin:0 0">B4A-Bridge: Disconnected</div>
<!-- taskbar -->
<div style="left:0;top:1039px;width:1920px;height:1px;background:#fff"></div>
<svg style="left:0;top:1040px" width="1920" height="40" viewBox="0 1040 1920 40">
<defs>
<linearGradient id="tbh" x1="0" y1="0" x2="1" y2="0">
<stop offset="0" stop-color="#1f4d7b"/><stop offset="0.06" stop-color="#24527f"/><stop offset="0.2" stop-color="#3570a2"/><stop offset="0.55" stop-color="#3470a3"/><stop offset="0.72" stop-color="#2b6396"/><stop offset="0.86" stop-color="#2c6596"/><stop offset="0.97" stop-color="#24547f"/><stop offset="1" stop-color="#2a5a86"/>
</linearGradient>
<linearGradient id="tbv" x1="0" y1="0" x2="0" y2="1">
<stop offset="0" stop-color="#fff" stop-opacity="0.25"/><stop offset="0.12" stop-color="#fff" stop-opacity="0.08"/><stop offset="0.8" stop-color="#fff" stop-opacity="0"/><stop offset="1" stop-color="#fff" stop-opacity="0.22"/>
</linearGradient>
<linearGradient id="btn" x1="0" y1="0" x2="0" y2="1">
<stop offset="0" stop-color="#9fc0dc"/><stop offset="0.5" stop-color="#5f8fbb"/><stop offset="1" stop-color="#4d80b0"/>
</linearGradient>
<radialGradient id="orb" cx="0.5" cy="0.3" r="0.7">
<stop offset="0" stop-color="#b7d3e6"/><stop offset="0.45" stop-color="#5f90b5"/><stop offset="0.55" stop-color="#0f5a93"/><stop offset="1" stop-color="#16b6e6"/>
</radialGradient>
<linearGradient id="btn2" x1="0" y1="0" x2="0.35" y2="1"><stop offset="0" stop-color="#c2d5e6"/><stop offset="0.35" stop-color="#6f98c0"/><stop offset="0.55" stop-color="#4b7fb1"/><stop offset="1" stop-color="#3f75a8"/></linearGradient>
<linearGradient id="btn3" x1="0" y1="0" x2="0.35" y2="1"><stop offset="0" stop-color="#e2ebf3"/><stop offset="0.45" stop-color="#9ab7d3"/><stop offset="1" stop-color="#86a9cb"/></linearGradient>
<linearGradient id="ieg" x1="0" y1="0" x2="1" y2="1"><stop offset="0" stop-color="#9ff0ff"/><stop offset="1" stop-color="#19a2e0"/></linearGradient>
</defs>
<rect x="0" y="1040" width="1920" height="40" fill="url(#tbh)"/>
<rect x="0" y="1040" width="1920" height="40" fill="url(#tbv)"/>
<rect x="0" y="1040" width="1920" height="1" fill="#2a3d50"/>
<rect x="0" y="1041" width="1920" height="1" fill="#8ab0d2" opacity="0.8"/>
<!-- start orb -->
<circle cx="27" cy="1060" r="18" fill="url(#orb)" stroke="#8aa9c2" stroke-width="0.8"/>
<path d="M17.5 1050c3.5-2 7-2 10.5 0l-2 8c-3.5-1.8-7-1.8-10.5 0z" fill="#f05a22"/>
<path d="M29 1052.5c3.5 1.8 7 1.2 10.5-1l-2 8.2c-3.5 2.2-7 2.2-10.5 1z" fill="#86bd3a"/>
<path d="M15.2 1060c3.5-1.8 7-1.8 10.5 0l-2 8.5c-3.5-1.8-7-1.8-10.5 0z" fill="#2a9ce0"/>
<path d="M26.8 1062c3.5 1.8 7 1.2 10.5-1l-2 8.5c-3.5 2.2-7 2.2-10.5 1z" fill="#fbbf24"/>
<!-- IE -->
<path d="M98.2 1066.2A10 10 0 1 1 100 1060.2" fill="none" stroke="url(#ieg)" stroke-width="5"/>
<rect x="82" y="1057.5" width="18.5" height="3.5" fill="#3cc0ee"/>
<path d="M78 1073.5c-4.5-4.5 2.5-17 14-23.5c8-4.5 13.5-4.5 11.5 1.5" fill="none" stroke="#f4b80c" stroke-width="2.6"/>
<!-- button frames -->
<g><rect x="121.5" y="1040.5" width="59" height="39" rx="3" fill="#0d1d2e"/><rect x="122.5" y="1041.5" width="57" height="37" rx="2.5" fill="url(#btn2)" stroke="#dfe9f2" stroke-opacity="0.85"/></g>
<g><rect x="183.5" y="1040.5" width="59" height="39" rx="3" fill="#0d1d2e"/><rect x="184.5" y="1041.5" width="57" height="37" rx="2.5" fill="url(#btn2)" stroke="#dfe9f2" stroke-opacity="0.85"/></g>
<g><rect x="431.5" y="1040.5" width="59" height="39" rx="3" fill="#0d1d2e"/><rect x="432.5" y="1041.5" width="57" height="37" rx="2.5" fill="url(#btn3)" stroke="#f4f8fb"/></g>
<g><rect x="617.5" y="1040.5" width="59" height="39" rx="3" fill="#0d1d2e"/><rect x="618.5" y="1041.5" width="57" height="37" rx="2.5" fill="url(#btn2)" stroke="#dfe9f2" stroke-opacity="0.85"/></g>
<!-- outlook -->
<path d="M139 1044h25v29h-29v-25c0-2 2-4 4-4z" fill="#fffdf4" stroke="#f0a010" stroke-width="1.2"/>
<path d="M150 1046h13v12h-13z" fill="#f8d860"/>
<ellipse cx="145.5" cy="1056.5" rx="5.5" ry="7" fill="none" stroke="#ea7a12" stroke-width="4"/>
<circle cx="160" cy="1057" r="4.3" fill="#fff8e0" stroke="#f0c040" stroke-width="0.8"/><path d="M158.5 1055l1.5 2.5 2-1" fill="none" stroke="#d04010" stroke-width="0.8"/>
<path d="M159 1061.5l7.5 13h-15z" fill="#f6d040" stroke="#a88418" stroke-width="0.8"/><rect x="158.3" y="1065" width="1.5" height="5" fill="#222"/><rect x="158.3" y="1071" width="1.5" height="1.5" fill="#222"/>
<!-- explorer -->
<linearGradient id="fold" x1="0" y1="0" x2="0" y2="1"><stop offset="0" stop-color="#fdf3c0"/><stop offset="1" stop-color="#f0cf6a"/></linearGradient>
<linearGradient id="stand" x1="0" y1="0" x2="1" y2="1"><stop offset="0" stop-color="#e8fbff"/><stop offset="1" stop-color="#5ab4e6"/></linearGradient>
<path d="M198.5 1051v-3a1 1 0 0 1 1-1h13l1 1v3z" fill="#f4dc90" stroke="#d4b060" stroke-width="0.8"/>
<rect x="201" y="1048" width="3" height="2" fill="#10c020"/><rect x="204" y="1048" width="6" height="2" fill="#fff"/>
<path d="M208.5 1053v-3a1 1 0 0 1 1-1h17l1 1v3z" fill="#f6e09a" stroke="#d4b060" stroke-width="0.8"/>
<rect x="209.5" y="1050" width="3" height="2" fill="#d02818"/><rect x="212.5" y="1050" width="6" height="2" fill="#fff"/>
<path d="M214.5 1055v-3a1 1 0 0 1 1-1h12l1 1v3z" fill="#f8e4a4" stroke="#d4b060" stroke-width="0.8"/>
<rect x="217" y="1052" width="3" height="2" fill="#1a90f0"/><rect x="220" y="1052" width="5" height="2" fill="#fff"/>
<rect x="197.5" y="1054.5" width="31" height="19" fill="url(#fold)" stroke="#d8b464" stroke-width="0.9"/>
<path d="M201 1075.5v-10.5a2 2 0 0 1 2-2h20a2 2 0 0 1 2 2v10.5h-6v-7h-12v7z" fill="url(#stand)" stroke="#3a9ad0" stroke-width="0.7"/>
<!-- media -->
<rect x="264" y="1050" width="22" height="23" fill="#cfe8f8"/><rect x="262" y="1049.5" width="22" height="23.5" fill="#b4dcf4"/><rect x="261" y="1049" width="21" height="24.5" fill="#a6d2ee"/>
<circle cx="271.5" cy="1061" r="8.6" fill="#f27b1c"/><path d="M268.5 1056v10.5l8-5.2z" fill="#fff"/>
<!-- java -->
<path d="M325.5 1054h20v11c0 4.5-3.5 6.5-10 6.5s-10-2-10-6.5z" fill="#fffbe0" stroke="#9a6420" stroke-width="1.1"/>
<ellipse cx="335.5" cy="1054.5" rx="9" ry="2.3" fill="#e84a20"/><ellipse cx="333" cy="1054.3" rx="4" ry="1.3" fill="#f4a030"/>
<path d="M345.5 1057.5h2.5a2.8 2.8 0 0 1 0 5.6l-2.5 1.5" fill="none" stroke="#9a6420" stroke-width="1.6"/>
<path d="M335 1053.5c-3-2 4-4 0-6.5c-1-0.7 1-2 4-2.5" fill="none" stroke="#8a8a8a" stroke-width="1.8"/>
<!-- db tools -->
<linearGradient id="gold" x1="0" y1="0" x2="1" y2="0"><stop offset="0" stop-color="#e8b808"/><stop offset="0.5" stop-color="#fff6b0"/><stop offset="1" stop-color="#e0b000"/></linearGradient>
<rect x="385" y="1054" width="15" height="19" fill="url(#gold)"/><ellipse cx="392.5" cy="1054" rx="7.5" ry="2" fill="#f8e070"/><ellipse cx="392.5" cy="1073" rx="7.5" ry="2" fill="#d8a800"/>
<path d="M385 1060c2.5 1.5 12.5 1.5 15 0M385 1066c2.5 1.5 12.5 1.5 15 0" fill="none" stroke="#b88a00" stroke-width="0.8"/>
<rect x="392" y="1045" width="6" height="7.5" fill="#7a7a7a"/><path d="M399 1045h4c5 0 9 3 9 9h-2c-1-3-3-4-6-4h-5z" fill="#6e6e6e"/>
<rect x="400" y="1052" width="4" height="9" fill="#d8d8d8"/>
<rect x="398.5" y="1061" width="6.5" height="15" rx="1" fill="#2f8cc4"/>
<rect x="406" y="1052" width="3.5" height="11" rx="1.5" fill="#b8d4ec"/><rect x="404.5" y="1063" width="7.5" height="13" rx="1" fill="#38a8dc"/>
<!-- b4a -->
<rect x="445" y="1044" width="32" height="32" fill="#fff"/>
<!-- npp -->
<linearGradient id="nppg" x1="0" y1="0" x2="0" y2="1"><stop offset="0" stop-color="#e8fc58"/><stop offset="0.55" stop-color="#80d040"/><stop offset="1" stop-color="#008a00"/></linearGradient>
<path d="M508.5 1044.5h17.5l6.5 5.5v25.5h-24z" fill="#fff" stroke="#8a8a8a" stroke-width="0.9"/>
<path d="M526 1044.5v5.5h6.5" fill="#ddd" stroke="#999" stroke-width="0.7"/>
<g fill="#aab8c4"><rect x="510" y="1046" width="15" height="1" opacity="0.7"/><rect x="510" y="1048" width="20" height="0.8"/><rect x="510" y="1050" width="20" height="0.8"/><rect x="510" y="1052" width="20" height="0.8"/><rect x="510" y="1054" width="20" height="0.8"/></g>
<rect x="510" y="1056" width="21" height="18" fill="url(#nppg)"/>
<path d="M514.5 1064v-8a2 2 0 0 1 3.5 0v8" fill="#ddd" stroke="#111" stroke-width="1.2"/>
<path d="M519 1058.5h3.5M520.8 1056.7v3.6M523 1058.5h3.5M524.8 1056.7v3.6" stroke="#111" stroke-width="1.1"/>
<path d="M524.5 1069l11-21" stroke="#e8a010" stroke-width="3.2"/><path d="M535.2 1048.5l1.8-3.3" stroke="#c82020" stroke-width="3"/><path d="M524.5 1069l-0.6 1.5" stroke="#222" stroke-width="1.5"/>
<!-- chrome -->
<path d="M585 1060L572.01 1052.50A15 15 0 0 1 597.99 1052.50z" fill="#db4437"/><path d="M585 1060L597.99 1052.50A15 15 0 0 1 585.00 1075.00z" fill="#fcc934"/><path d="M585 1060L585.00 1075.00A15 15 0 0 1 572.01 1052.50z" fill="#1fa463"/><circle cx="585" cy="1060" r="6.6" fill="#fff"/><circle cx="585" cy="1060" r="5.2" fill="#4a8af4"/>
<path d="M647 1060L634.01 1052.50A15 15 0 0 1 659.99 1052.50z" fill="#db4437"/><path d="M647 1060L659.99 1052.50A15 15 0 0 1 647.00 1075.00z" fill="#fcc934"/><path d="M647 1060L647.00 1075.00A15 15 0 0 1 634.01 1052.50z" fill="#1fa463"/><circle cx="647" cy="1060" r="6.6" fill="#fff"/><circle cx="647" cy="1060" r="5.2" fill="#4a8af4"/>
<path d="M651 1076v-7c0-3.5 2.5-5.5 5.5-5.5s5.5 2 5.5 5.5v7z" fill="#151515"/><rect x="652" y="1067" width="9" height="2.2" fill="#e8884a"/><path d="M661 1073l3.5-3v6z" fill="#151515"/>
<!-- tray -->
<path d="M1709 1063.5h8l-4-4z" fill="#fff"/>
<path d="M1731 1053v16" stroke="#fff" stroke-width="1.4"/><path d="M1731.5 1054h8l-1 2h5v6h-6l-1-2h-5z" fill="#fff" stroke="#333" stroke-width="0.5"/>
<rect x="1755.5" y="1055.5" width="8" height="12" rx="1" fill="none" stroke="#fff" stroke-width="1.3"/><path d="M1759 1057h7v5l-2.5 2v4M1761 1053v4M1764 1053v4" fill="none" stroke="#fff" stroke-width="1.3"/>
<g fill="#fff"><rect x="1779" y="1064" width="2" height="3"/><rect x="1782" y="1062" width="2" height="5"/><rect x="1785" y="1059" width="2" height="8"/><rect x="1788" y="1057" width="2" height="10"/><rect x="1791" y="1055" width="2" height="12"/></g>
<path d="M1803 1058h3l4-4v14l-4-4h-3z" fill="#ddd" stroke="#222" stroke-width="0.4"/>
<circle cx="1813" cy="1064.5" r="3.6" fill="#fff" stroke="#e02020" stroke-width="1.8"/><path d="M1810.5 1062l5 5" stroke="#e02020" stroke-width="1.6"/>
<rect x="1907.5" y="1041.5" width="12" height="38" fill="#3a6a9a" stroke="#6a9ac8"/>
</svg>
<div class="t" style="left:446px;top:1053px;font-size:16px;color:#1ccfc4;transform:scaleX(0.86);transform-origin:0 0">B4A</div>
<div class="t" style="left:1681px;top:1052px;font-size:11px;color:#e8eef4">IT</div>
<div class="t" style="left:1851px;top:1048px;font-size:11px;color:#fff">10:10</div>
<div class="t" style="left:1836px;top:1065px;font-size:11px;color:#fff">16/01/2017</div>
</body></html>
